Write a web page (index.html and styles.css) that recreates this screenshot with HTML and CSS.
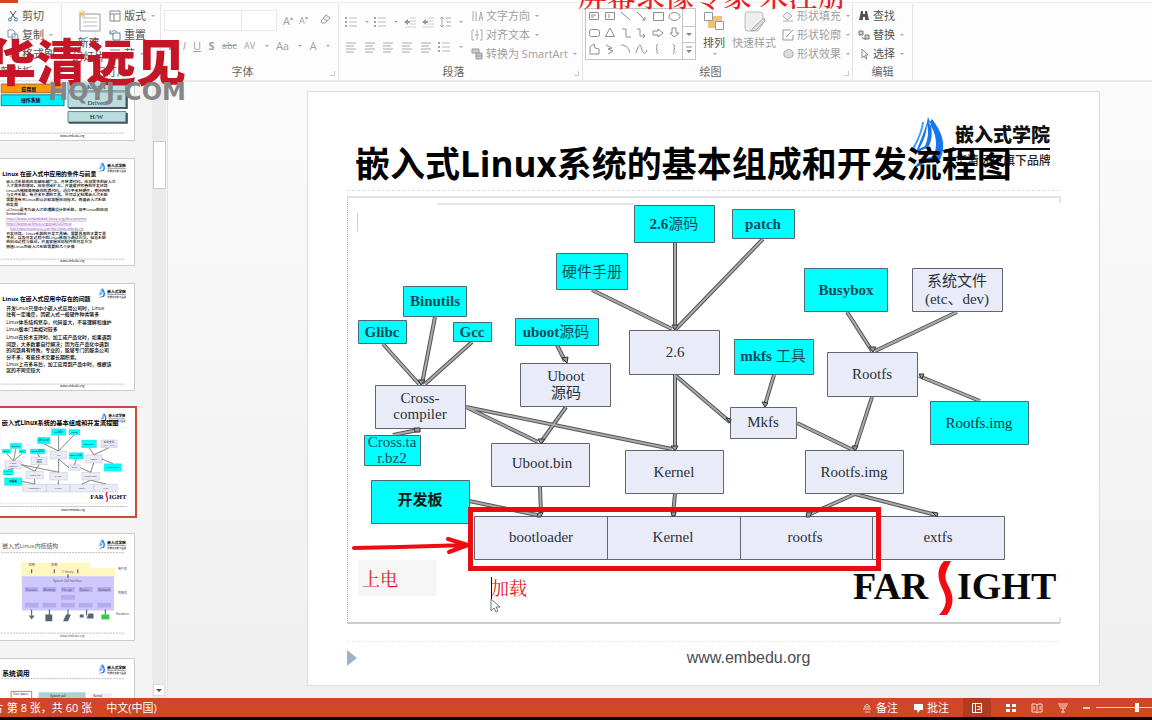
FILE: index.html
```html
<!DOCTYPE html>
<html lang="zh-CN">
<head>
<meta charset="utf-8">
<title>嵌入式Linux系统的基本组成和开发流程图</title>
<link rel="stylesheet" href="styles.css">
</head>
<body>
<svg class="defs" aria-hidden="true">
  <defs>
    <symbol id="lines" viewBox="0 0 12 12"><path d="M1 2h10M1 5h8M1 8h10M1 11h8" stroke="#aaa" fill="none"/></symbol>
    <symbol id="list" viewBox="0 0 12 12"><path d="M4 2h8M4 6h8M4 10h8" stroke="#bbb" fill="none"/><path d="M0 2h2M0 6h2M0 10h2" stroke="#888" stroke-width="1.5"/></symbol>
    <symbol id="indent" viewBox="0 0 12 12"><path d="M6 2h6M6 5h6M6 8h6M1 11h11" stroke="#ccc" fill="none"/><path d="M0 6l4-3v2h2v2H4v2z" fill="#999"/></symbol>
    <symbol id="brand" viewBox="0 0 140 60">
      <path d="M18 1C16 14 9 26 5 39c4-4 8-6 13-7 5-10 5-20 0-31zM22 3c10 13 15 26 8 41-4 3-9 3-14 2l-14 8c6-8 12-13 21-13 5-10 4-23-4-34z" fill="#1477f0"/>
      <path d="M17 8c0 9-4 18-8 25l6-3c3-7 4-14 2-22z" fill="#fff"/>
      <path d="M13 6C12 18 6 27 2 35" stroke="#4a9bf5" stroke-width="2" fill="none"/>
      <text x="45" y="26" font-size="19" font-weight="900" fill="#111">嵌入式学院</text>
      <path d="M45 33h95" stroke="#111" stroke-width="2"/>
      <text x="45" y="49" font-size="12" fill="#222" font-weight="500">华清远见旗下品牌</text>
    </symbol>
  </defs>
</svg>
<div class="app">
  <header class="ribbon">
    <span class="file-tab"></span>
    <section class="group clipboard">
      <div class="tools stack">
        <button><svg class="ico" viewBox="0 0 12 12"><path d="M3 1l5 7M9 1L4 8" stroke="#555" fill="none"/><circle cx="3" cy="9.500" r="1.500" stroke="#3f75b5" fill="none"/><circle cx="9" cy="9.500" r="1.500" stroke="#3f75b5" fill="none"/></svg>剪切</button>
        <button><svg class="ico" viewBox="0 0 12 12"><path d="M1 1h5l2 2v5H1zM5 5h5l1 2v4H5z" fill="#fff" stroke="#7892b0"/></svg>复制 <i class="caret"></i></button>
        <button><svg class="ico" viewBox="0 0 12 12"><path d="M2 8l5-5 3 3-5 5z" fill="#dba95c"/></svg>格式刷</button>
      </div>
      <h2>剪贴板</h2>
    </section>
    <section class="group slides">
      <div class="tools">
        <button class="big"><svg class="ico24" viewBox="0 0 24 24"><path d="M3 5h20v17H3z" fill="#fff" stroke="#999"/><path d="M6 9h14M6 13h14M6 17h14" stroke="#bbb"/><path d="M5 1v8M1 5h8M2 2l6 6M8 2L2 8" stroke="#eeb765"/></svg>新建<br>幻灯片</button>
        <div class="stack">
          <button><svg class="ico" viewBox="0 0 12 12"><path d="M1 1h10v10H1zM1 4h10M5 4v7" fill="#fff" stroke="#888"/></svg>版式 <i class="caret"></i></button>
          <button><svg class="ico" viewBox="0 0 12 12"><path d="M4 4h7v7H4zM1 1v4h4M1 5c2-4 5-4 7-2" fill="none" stroke="#6b84a5"/></svg>重置</button>
          <button><svg class="ico" viewBox="0 0 12 12"><path d="M1 2h10M1 6h10v5H1z" fill="none" stroke="#888"/></svg>节 <i class="caret"></i></button>
        </div>
      </div>
      <h2>幻灯片</h2>
    </section>
    <section class="group font dim launch">
      <div class="tools rows">
        <div class="row"><select class="family" aria-label="字体"><option></option></select><select class="size" aria-label="字号"><option></option></select><button>A<sup>▴</sup></button><button class="small">A<sup>▾</sup></button><button class="clear" aria-label="清除格式"><svg class="ico" viewBox="0 0 12 12"><path d="M2 8l5-6 4 3-5 5H3zM4 5l4 3" fill="none" stroke="#999"/></svg></button></div>
        <div class="row spread"><button><b>B</b></button><button><em>I</em></button><button><u>U</u></button><button><b>S</b></button><button class="small"><s>abc</s></button><button class="small">AV</button><i class="caret"></i><button>Aa</button><i class="caret"></i><button>A</button><i class="caret"></i></div>
      </div>
      <h2>字体</h2><i class="corner"></i>
    </section>
    <section class="group para dim launch">
      <div class="tools">
        <div class="rows">
          <div class="row spread"><svg class="ico"><use href="#list"/></svg><i class="caret"></i><svg class="ico"><use href="#list"/></svg><i class="caret"></i><svg class="ico"><use href="#indent"/></svg><svg class="ico"><use href="#indent"/></svg><svg class="ico" viewBox="0 0 12 12"><path d="M3 1v10M1 3l2-2 2 2M1 9l2 2 2-2M7 2h5M7 6h5M7 10h5" fill="none" stroke="#aaa"/></svg><i class="caret"></i></div>
          <div class="row spread"><svg class="ico"><use href="#lines"/></svg><svg class="ico"><use href="#lines"/></svg><svg class="ico"><use href="#lines"/></svg><svg class="ico"><use href="#lines"/></svg><svg class="ico"><use href="#lines"/></svg><svg class="ico"><use href="#list"/></svg><i class="caret"></i></div>
        </div>
        <div class="stack">
          <button><svg class="ico" viewBox="0 0 12 12"><path d="M2 1v10M5 1v10M8 11l2-9 2 9M9 8h3" fill="none" stroke="#aaa"/></svg>文字方向 <i class="caret"></i></button>
          <button><svg class="ico" viewBox="0 0 12 12"><path d="M3 1H1v10h2M9 1h2v10H9M6 1v10M4 6h4" fill="none" stroke="#aaa"/></svg>对齐文本 <i class="caret"></i></button>
          <button><svg class="ico" viewBox="0 0 12 12"><path d="M1 1h7v4H1zM5 5h6v6H5zM5 8h6" fill="#ccc" stroke="#999"/></svg>转换为 SmartArt <i class="caret"></i></button>
        </div>
      </div>
      <h2>段落</h2><i class="corner"></i>
    </section>
    <section class="group draw launch">
      <div class="tools">
        <svg class="gallery" viewBox="0 0 111 52">
          <path d="M.5.500h110v51H.5zM97.500 1v50M98 18.500h13M98 34.500h13" fill="#fff" stroke="#c4c4c4"/>
          <g fill="none" stroke="#8d8d8d">
            <path d="M4.500 4.500h9v7h-9zM6 7h5M6 9h3M20.500 4.500h9v7h-9zM24 6v4M36 4l9 8M52 4l8 8M60 9v3h-3M68.500 4.500h10v8h-10z"/>
            <ellipse cx="89.500" cy="8.500" rx="5.500" ry="4"/>
            <rect x="4.500" y="21.500" width="10" height="7" rx="2"/>
            <path d="M25 20l-4.500 8.500h9zM37 21h4v8h5M52 21h3v7h5M58 26l2 2-2 2M68 23h5v-2l5 4-5 4v-2h-5zM87 20h4v5h3l-5 4-4-4h2zM5 46v-7l4-3 1 4 4 1v5zM21 37l6 3-4 1 5 2-5 3M36 37c6 0 8 4 9 8M51 45c4-13 5-7 6-3s4 4 5 0M73 36c-4 3 1 4-2 5 3 1-1 3 2 5M88 36c4 3-1 4 2 5-3 1 1 3-2 5"/>
          </g>
          <path d="M101 25h6l-3 3zM101 42h6l-3 3z" fill="#888"/><path d="M101 39h6" stroke="#888"/>
        </svg>
        <button class="big"><svg class="ico24" viewBox="0 0 24 24"><path d="M6 7h14v12H6z" fill="#edc476"/><path d="M2.500 3.500h8v8h-8zM13.500 12.500h8v8h-8z" fill="#fff" stroke="#999"/></svg>排列<i class="caret"></i></button>
        <button class="big dim"><svg class="ico24" viewBox="0 0 24 24"><path d="M6 3h12q3 0 3 3v9l-5 7H6q-3 0-3-3V6q0-3 3-3z" fill="#eee" stroke="#bbb"/><path d="M22 9L11 19l-2 3 5-1 9-9z" fill="#ddd" stroke="#aaa"/></svg>快速样式</button>
        <div class="stack dim">
          <button><svg class="ico" viewBox="0 0 12 12"><path d="M5 2l5 4-5 4-4-4zM1 11h10" fill="#eee" stroke="#aaa"/></svg>形状填充 <i class="caret"></i></button>
          <button><svg class="ico" viewBox="0 0 12 12"><path d="M9 1H1v10h10V6M4 8l7-7" fill="none" stroke="#999"/></svg>形状轮廓 <i class="caret"></i></button>
          <button><svg class="ico" viewBox="0 0 12 12"><path d="M2 4q5-5 9 0v4q-4 4-9 0z" fill="#ddd" stroke="#aaa"/></svg>形状效果 <i class="caret"></i></button>
        </div>
      </div>
      <h2>绘图</h2><i class="corner"></i>
    </section>
    <section class="group edit">
      <div class="tools stack">
        <button><svg class="ico" viewBox="0 0 12 12"><path d="M3 1h2v3h2V1h2l2 9H7V7H5v3H1z" fill="#555"/></svg>查找</button>
        <button><svg class="ico" viewBox="0 0 12 12"><path d="M1 2h4v4H1zM4 8q1 3 4 2M7 6h4v4H7z" fill="#ccc" stroke="#777"/></svg>替换 <i class="caret"></i></button>
        <button><svg class="ico" viewBox="0 0 12 12"><path d="M4 1v9l2-2 2 3 1-1-2-3h3z" fill="#fff" stroke="#888"/></svg>选择 <i class="caret"></i></button>
      </div>
      <h2>编辑</h2>
    </section>
  </header>

  <main class="work">
    <aside class="panel">
      <div class="thumbs">
        <svg class="thumb" viewBox="0 0 134 108">
          <path d="M0 51h64v9H0z" fill="#f90" stroke="#a65"/><path d="M0 62h64v11H0z" fill="#0ef" stroke="#088"/>
          <path d="M68 47h59v11H68zM68 59h59v16H68zM68 79h59v11H68z" fill="#b9dcdd" stroke="#68868a"/>
          <path d="M69 75.500h59v-14M69 90.500h59v-10" fill="none" stroke="#456" stroke-width="2"/>
          <g font-size="7" text-anchor="middle" fill="#123"><text x="28" y="58" font-size="5" font-weight="900">应用层</text><text x="30" y="69" font-size="5" font-weight="900">操作系统</text><text class="serif" x="97" y="56">Kernel</text><text class="serif" x="97" y="72">Driver</text><text class="serif" x="97" y="87">H/W</text></g>
          <path d="M0 101h126" stroke="#bbb" stroke-dasharray="2 1"/><text x="60" y="105" font-size="3">www.embedu.org</text>
        </svg>
        <svg class="thumb" viewBox="0 0 134 108">
          <use href="#brand" x="99" y="3" width="28" height="12"/>
          <text x="1" y="17" font-size="6" font-weight="700">Linux 在嵌入式中应用的条件与前景</text>
          <g font-size="4" font-weight="500">
            <text x="5" y="24">嵌入式系统的应用越来越广泛，开放源代码，应用需求的嵌入式</text><text x="5" y="29">人才需求的增加，应用领域扩大，并且提供完善的开发环境</text><text x="5" y="34">Linux内核精简而高效的源代码，适合于多种硬件，支持网络</text><text x="5" y="38">与文件系统，有许多开源的工具，并可以定制成嵌入式系统</text>
            <text x="5" y="43">需要具有对Linux的认识和掌握应用技术，而且嵌入式系统</text><text x="5" y="48">的发展</text>
            <text x="5" y="53">uClinux是专为嵌入式处理器设计的系统，用于Linux的应用</text><text x="5" y="57">Embedded</text>
            <g fill="#8a43b8" text-decoration="underline"><text x="5" y="62">http://www.embedded-linux.org/documents</text><text x="5" y="67">http://www.uclinux.org/pub/uClinux</text><text x="9" y="72" font-size="3">http://www.linuxdevices.com   http://www.embedu.org</text></g>
            <text x="5" y="77">开发环境，Linux系统的开发工具链，需要具备的主要工具</text><text x="5" y="81">平台，以及开发过程中的Linux移植与调试方法，包括系统</text><text x="5" y="86">的启动过程与驱动，并且掌握应用软件的开发方法</text><text x="5" y="91">移植Linux到嵌入式系统需要的几个步骤</text>
          </g>
          <path d="M0 102h126" stroke="#bbb" stroke-dasharray="2 1"/><text x="60" y="105" font-size="3">www.embedu.org</text>
        </svg>
        <svg class="thumb" viewBox="0 0 134 108">
          <use href="#brand" x="99" y="4" width="28" height="12"/>
          <text x="1" y="17" font-size="6" font-weight="700">Linux 在嵌入式应用中存在的问题</text>
          <g font-size="5" font-weight="500">
            <text x="5" y="26">开发Linux只是中小嵌入式应用公司时，Linux</text><text x="5" y="33">往有一定难度，因嵌入式一般硬件种类繁多</text><text x="5" y="41">Linux体系结构复杂，代码量大，不易理解和维护</text><text x="5" y="48">Linux版本门类相对较多</text><text x="5" y="56">Linux在技术支持时，加工成产品化时，如果遇到</text><text x="5" y="63">问题，大多数要自行解决；因为在产品化中遇到</text><text x="5" y="69">的问题具有特殊，专业的，能够专门的服务公司</text><text x="5" y="76">分不多，有些技术需要长期积累。</text><text x="5" y="84">Linux上市多年后，加工应用到产品中时，根据该</text><text x="5" y="90">区的不同需较大</text>
          </g>
          <path d="M0 102h126" stroke="#bbb" stroke-dasharray="2 1"/><text x="60" y="105" font-size="3">www.embedu.org</text>
        </svg>
        <svg class="thumb selected" viewBox="346 89 753 606" preserveAspectRatio="xMinYMin meet">
          <use href="#brand" x="910" y="116" width="140" height="60"/>
          <text x="356" y="182" font-size="35" font-weight="700">嵌入式Linux系统的基本组成和开发流程图</text>
          <use href="#diagram"/>
          <path d="M346 642h713" stroke="#999" stroke-width="4" stroke-dasharray="10 4"/><text x="690" y="668" font-size="16">www.embedu.org</text>
        </svg>
        <svg class="thumb" viewBox="0 0 134 108">
          <use href="#brand" x="99" y="5" width="28" height="12"/><text x="1" y="14" font-size="6" fill="#555">嵌入式Linux内核结构</text>
          <path d="M0 19h126M0 101h126" stroke="#bbb" stroke-dasharray="2 1"/>
          <path d="M20 29h70v6h26v10H20z" fill="#fff6c0"/><path d="M21 43h94v35H21z" fill="#cfc8ff"/>
          <path d="M24 54h14v5H24zM42 54h14v5H42zM61 54h14v5H61zM79 54h14v5H79zM98 54h14v5H98zM61 62h14v5H61zM24 70h14v5H24zM42 70h14v5H42zM61 70h14v5H61zM79 70h14v5H79zM98 70h14v5H98z" fill="#b4aced"/>
          <g font-size="3" fill="#446"><text x="28" y="33">应用</text><text x="51" y="33">应用</text><text x="53" y="49">System Call Interface</text><text x="62" y="40">C library</text><text x="25" y="58">Process</text><text x="43" y="58">Memory</text><text x="62" y="58">File sys</text><text x="80" y="58">Device</text><text x="99" y="58">Network</text><text x="119" y="37">用户态</text><text x="119" y="61">内核态</text><text x="117" y="83">Hardware</text><text x="60" y="105">www.embedu.org</text></g>
          <path d="M31 36v4M54 36v4M78 36v4M68 41v4M31 77v6M49 77v6M68 77v6M87 77v6M106 77v5" stroke="#446"/><path d="M28 83h6l-3 4zM45 82h7v7h-7zM66 82h5l-3 7h-5zM80 82h4v3h-4zM89 81h5v5h-7z" fill="#567"/><path d="M102 82h8v5h-8z" fill="#3c4"/>
        </svg>
        <svg class="thumb" viewBox="0 0 134 108">
          <use href="#brand" x="99" y="5" width="28" height="12"/><text x="1" y="17" font-size="7" font-weight="700">系统调用</text>
          <path d="M0 20h126" stroke="#bbb" stroke-dasharray="2 1"/><path d="M10 33h21v12H10z" fill="#fff" stroke="#a88"/><path d="M38 34h48v12H38z" fill="#abd3ce"/><path d="M91 35h22v10H91z" fill="#eee"/>
          <g font-size="3"><text x="12" y="37">User space</text><text x="50" y="39">System call</text><text x="94" y="39">Kernel</text></g>
        </svg>
      </div>
      <div class="scroll"><span class="handle"></span><button aria-label="向下"><i class="caret dark"></i></button></div>
    </aside>

    <section class="stage">
      <article class="slide">
        <svg class="brand" viewBox="0 0 140 60"><use href="#brand"/></svg>
        <h1>嵌入式Linux系统的基本组成和开发流程图</h1>
        <svg class="diagram" viewBox="347 196 713 428">
          <g id="diagram">
            <path d="M347.500 196v427" stroke="#aaa" stroke-dasharray="1 1"/><path d="M347 197h713v6M1060 617v6" fill="none" stroke="#e0e4e4" stroke-width="2"/><path d="M347 623h713" stroke="#ccc" stroke-width="2"/>
            <path d="M357.500 213v18M437 204h198" stroke="#ccc"/>
            <path stroke="#555" stroke-width="4" fill="none" d="M675 243V329M763 239L676 329M592 290L672 329M383 344L419 384M435 317L422 384M472 342L425 384M557 345L565 361M566 407L541 442M466 407L538 442M466 407L672 449M675 375V449M675 375L730 422M774 375L765 405M797 423L853 450M872 397L855 449M847 312L872 351M957 312L875 351M980 401L919 376M393 435L418 430M540 487L541 514M675 494L673 514M469 501L537 515M855 494L808 515M855 494L936 515"/>
            <path stroke="#aaa" stroke-width="2" fill="none" d="M675 243V329M763 239L676 329M592 290L672 329M383 344L419 384M435 317L422 384M472 342L425 384M557 345L565 361M566 407L541 442M466 407L538 442M466 407L672 449M675 375V449M675 375L730 422M774 375L765 405M797 423L853 450M872 397L855 449M847 312L872 351M957 312L875 351M980 401L919 376M393 435L418 430M540 487L541 514M675 494L673 514M469 501L537 515M855 494L808 515M855 494L936 515"/>
            <g stroke="#4c6870" fill="#0ff">
              <path d="M634.500 205.500h80v37h-80zM732.500 209.500h62v29h-62zM556.500 253.500h71v36h-71zM403.500 286.500h63v30h-63zM358.500 320.500h48v23h-48zM453.500 322.500h38v19h-38zM515.500 318.500h83v27h-83zM364.500 435.500h56v30h-56zM371.500 480.500h98v43h-98zM804.500 268.500h83v43h-83zM734.500 339.500h79v35h-79zM930.500 401.500h98v43h-98z"/>
              <path fill="#e9ecf8" stroke="#63656e" d="M520.500 363.500h90v43h-90zM629.500 330.500h90v44h-90zM375.500 385.500h90v43h-90zM491.500 443.500h98v43h-98zM625.500 450.500h98v43h-98zM912.500 268.500h90v43h-90zM827.500 352.500h90v44h-90zM730.500 407.500h66v31h-66zM805.500 450.500h98v43h-98zM474.500 516.500h530v43h-530zM607.500 516v43M740.500 516v43M872.500 516v43"/>
            </g>
            <path fill="#999" stroke="#333" d="M672 325h6l-3 5zM418 380h7l-4 5zM562 358l6-1-1 6zM538 439h7l-4 5zM671 446h7l-3 5zM726 418l5 1-1 4zM762 402l6 1-3 4zM852 446h6l-3 5zM869 347h7l-3 5zM919 374l5 0-2 5zM414 428h6v4h-5zM538 513l5-1-2 5h-4zM671 512h5l-1 4h-3zM807 512h5l-2 5h-4zM932 512l6 1-1 4z"/>
            <g class="node-text" fill="#293038">
              <text x="566" y="381">Uboot</text><text x="566" y="398">源码</text><text x="675" y="357">2.6</text><text x="420" y="403">Cross-</text><text x="420" y="419">compiler</text><text x="542" y="468">Uboot.bin</text><text x="674" y="477">Kernel</text><text x="957" y="286">系统文件</text><text x="957" y="304">(etc、dev)</text><text x="872" y="379">Rootfs</text><text x="763" y="427">Mkfs</text><text x="854" y="477">Rootfs.img</text><text x="979" y="428">Rootfs.img</text><text x="541" y="542">bootloader</text><text x="673" y="542">Kernel</text><text x="805" y="542">rootfs</text><text x="938" y="542">extfs</text>
              <g fill="#074b57"><text x="392" y="447">Cross.ta</text><text x="392" y="463">r.bz2</text><text x="592" y="277">硬件手册</text><g font-weight="700"><text x="674" y="229">2.6<tspan font-weight="400">源码</tspan></text><text x="763" y="229">patch</text><text x="435" y="306">Binutils</text><text x="382" y="337">Glibc</text><text x="472" y="337">Gcc</text><text x="556" y="337">uboot<tspan font-weight="400">源码</tspan></text><text x="846" y="295">Busybox</text><text x="773" y="361">mkfs <tspan font-weight="400">工具</tspan></text></g></g>
              <text class="board" x="420" y="505" fill="#111">开发板</text>
            </g>
            <g class="farsight"><text x="853" y="599">FAR</text><text x="957" y="599">IGHT</text></g>
            <path d="M944 561h7c-8 15-6 18-2 26 5 10 5 18-2 28h-8c9-10 8-17 3-27-5-11-5-20 2-27z" fill="#f20a14"/>
          </g>
          <path d="M358 560h79v36h-79z" fill="#f6f6f6"/>
          <path d="M470.500 509.500h408v59h-408z" fill="none" stroke="#e80d12" stroke-width="5"/>
          <path d="M354 548L400 547 467 545M448 539L468 545 449 552" fill="none" stroke="#f00b12" stroke-width="4" stroke-linecap="round" stroke-linejoin="round"/>
          <g class="note"><text x="362" y="586">上电</text><text x="491" y="595">加载</text></g>
          <path d="M491.500 577v22" stroke="#111"/><path d="M491 599v12l3-3 2 4 2-1-2-4h4z" fill="#fff" stroke="#777"/>
        </svg>
        <footer><i class="play"></i><span>www.embedu.org</span></footer>
      </article>
    </section>
  </main>

  <footer class="status">
    <span class="count">幻灯片 第 8 张，共 60 张</span><span>中文(中国)</span>
    <div class="views">
      <button><svg class="ico" viewBox="0 0 12 12"><path d="M2 7h8M4 10h5M6 2l3 3H3z" stroke="#f8cfc2" fill="none"/></svg>备注</button>
      <button><svg class="ico" viewBox="0 0 12 12"><path d="M2 2h9v6H8l-2 3-1-3H2z" fill="#fff"/></svg>批注</button>
      <button class="on" aria-label="普通视图"><svg class="ico" viewBox="0 0 12 12"><path d="M1.500 1.500h9v9h-9zM4.500 1v9M6 4.500h3v3H6" stroke="#fff" fill="none"/></svg></button>
      <button aria-label="幻灯片浏览"><svg class="ico" viewBox="0 0 12 12"><path d="M1 2h4v3H1zM7 2h4v3H7zM1 7h4v3H1zM7 7h4v3H7z" fill="#fff"/></svg></button>
      <button aria-label="阅读视图"><svg class="ico" viewBox="0 0 12 12"><path d="M1 2h4l1 1 1-1h4v8H7l-1 1-1-1H1zM6 3v7M2 5h2M2 7h2M8 5h2M8 7h2" stroke="#fbd8cd" fill="none"/></svg></button>
      <button aria-label="幻灯片放映"><svg class="ico" viewBox="0 0 12 12"><path d="M1 2h10M2 4h8M3 6h6M6 6v5M4 10h4" stroke="#fbd8cd" fill="none"/></svg></button>
      <span class="minus"></span><input type="range" min="0" max="100" value="75" aria-label="缩放">
    </div>
  </footer>

  <div class="recorder">屏幕录像专家 未注册</div>
  <div class="watermark"><strong>华清远见</strong><span>HQYJ.COM</span></div>
</div>
</body>
</html>
```
FILE: styles.css
```css
* { box-sizing: border-box; }
body { margin: 0; font: 11px/14px "Open Sans", "Noto Sans CJK SC", sans-serif; color: #555; }
button { border: 0; background: none; padding: 0; font: inherit; color: inherit; }
h1, h2 { margin: 0; font: inherit; }
text { font-family: "Open Sans", "Noto Sans CJK SC", sans-serif; }
.defs { position: absolute; width: 0; height: 0; }
.app { position: relative; display: flex; flex-direction: column; height: 100vh; overflow: hidden; background: #f4f4f4; border-bottom: 3px solid #000; }

.ribbon { position: relative; flex: none; display: flex; height: 82px; padding-top: 4px; background: #fdfdfd; border-bottom: 2px solid #e9e9e9; }
.ribbon::before { content: ""; position: absolute; top: 2px; left: 0; right: 0; height: 1px; background: #eee; }
.file-tab { position: absolute; top: 0; left: 0; width: 18px; height: 3px; background: #d04727; }
.group { position: relative; flex: none; display: flex; flex-direction: column; border-right: 1px solid #e4e4e4; }
.group h2 { height: 16px; text-align: center; line-height: 16px; color: #666; }
.launch h2 { padding-right: 14px; }
.tools { flex: 1; display: flex; align-items: flex-start; padding-top: 2px; }
.stack { display: flex; flex-direction: column; align-items: flex-start; }
.stack button { display: flex; align-items: center; gap: 3px; height: 19px; white-space: nowrap; }
.ico { width: 12px; height: 12px; flex: none; }
.ico24 { width: 24px; height: 24px; }
.big { display: flex; flex-direction: column; align-items: center; gap: 3px; padding-top: 3px; white-space: nowrap; }
.caret { flex: none; width: 0; height: 0; margin-left: 2px; border: 2px solid transparent; border-top-color: #aaa; border-bottom: 0; }
.caret.dark { border-width: 3px; border-top-color: #555; margin: 0; }
.corner { position: absolute; right: 3px; bottom: 4px; width: 5px; height: 5px; border: solid #ccc; border-width: 0 1px 1px 0; }
.dim .tools, .tools .dim { color: #a0a0a0; }
.clipboard { width: 62px; }
.clipboard .tools { padding-left: 7px; }
.clipboard h2 { text-align: left; }
.slides { width: 99px; }
.slides .tools { gap: 4px; padding-left: 10px; }
.font { width: 178px; }
.rows { flex-direction: column; display: flex; }
.row { display: flex; align-items: center; height: 25px; gap: 6px; }
.row sup { font-size: 6px; line-height: 6px; }
.font .tools { align-items: stretch; padding: 4px 4px 0 3px; }
.font select { height: 21px; border: 1px solid #e8e8e8; background: #fff; appearance: none; }
.family { width: 78px; }
.size { width: 36px; margin-left: -7px; }
.clear { margin-left: 5px; }
.spread { justify-content: space-between; gap: 0; padding: 0 4px; }
.small { font-size: 9px; }
.para { width: 244px; }
.para .tools { padding-left: 6px; gap: 8px; }
.para .rows { width: 118px; padding-top: 3px; }
.para .spread { padding: 0; }
.draw { width: 270px; }
.draw .tools { padding-left: 2px; gap: 6px; }
.gallery { width: 111px; height: 52px; margin-top: 2px; }
.edit { width: 60px; }
.edit .tools { padding-left: 5px; }

.work { flex: 1; min-height: 0; display: flex; }
.panel { flex: none; width: 168px; display: flex; justify-content: space-between; overflow: hidden; border-right: 1px solid #e2e2e2; background: #f4f4f4; }
.thumbs { display: flex; flex-direction: column; gap: 17px; margin-top: -49px; }
.thumb { flex: none; width: 135px; height: 108px; background: #fff; border: 1px solid #ccc; border-left: 0; }
.thumb.selected { width: 137px; height: 112px; margin: -2px 0; border: 2px solid #cf4a3a; border-left: 0; }
.serif { font-family: "Liberation Serif", serif; }
.scroll { width: 14px; margin-right: 1px; display: flex; flex-direction: column; justify-content: space-between; align-items: center; padding: 59px 0 2px; background: #eaeaea; }
.handle { width: 13px; height: 48px; background: #fff; border: 1px solid #ccc; }
.scroll button { display: grid; place-items: center; width: 12px; height: 12px; background: #fff; border: 1px solid #ddd; }
.stage { flex: 1; padding: 9px 52px 12px 139px; background: linear-gradient(#fbfbfb, #efefef); }
.slide { position: relative; height: 100%; display: flex; flex-direction: column; padding: 47px 39px 0; background: #fff; border: 1px solid #ddd; }
.brand { position: absolute; top: 24px; right: 49px; width: 140px; height: 60px; }
.slide h1 { position: relative; height: 52px; padding-left: 8px; border-bottom: 1px dashed #ddd; color: #000; font-size: 35px; line-height: 50px; font-weight: 700; white-space: nowrap; }
.diagram { width: 100%; margin-top: 5px; overflow: visible; }
.node-text text { font-family: "Liberation Serif", "Noto Sans CJK SC", serif; font-size: 15px; text-anchor: middle; }
.node-text .board { font-weight: 700; }
.note text { font-family: "Liberation Serif", "Noto Serif CJK SC", "Noto Sans CJK SC", serif; font-size: 18px; fill: #e4151d; }
.farsight text { font-family: "Liberation Serif", serif; font-size: 38px; font-weight: 700; fill: #090909; }
.slide footer { display: grid; grid-template-columns: 10px 1fr; margin-top: 17px; border-top: 1px dashed #e8e8e8; padding-top: 8px; text-align: center; font: 16px/16px "Liberation Sans", sans-serif; color: #4c4c55; }
.slide footer span { padding-left: 80px; }
.play { border: 8px solid transparent; border-left: 10px solid #9fb2c8; border-right: 0; }

.status { flex: none; height: 19px; display: flex; align-items: center; gap: 14px; overflow: hidden; background: #d04727; color: #fff; white-space: nowrap; }
.count { margin-left: -29px; }
.views { margin-left: auto; display: flex; align-items: center; gap: 14px; }
.views button { display: flex; align-items: center; gap: 3px; height: 19px; }
.views .on { padding: 0 8px; background: #b23c20; }
.minus { width: 7px; height: 2px; background: #f8cfc2; }
.views input { appearance: none; width: 56px; height: 1px; margin: 0 0 0 -8px; background: #f8cfc2; }
.views input::-webkit-slider-thumb { appearance: none; width: 4px; height: 9px; background: #fff; }

.recorder { position: absolute; top: -21px; left: 50%; margin-left: 2px; color: #ee1a20; font: 500 29px/32px "Noto Serif CJK SC", "Noto Sans CJK SC", serif; white-space: nowrap; }
.watermark { position: absolute; top: 33px; left: -14px; display: flex; flex-direction: column; align-items: flex-end; white-space: nowrap; }
.watermark strong { color: #c41627; font: 900 50px/52px "Noto Sans CJK SC", sans-serif; }
.watermark span { color: #858585; font: bold 24px/15px "DejaVu Sans", sans-serif; }
```
